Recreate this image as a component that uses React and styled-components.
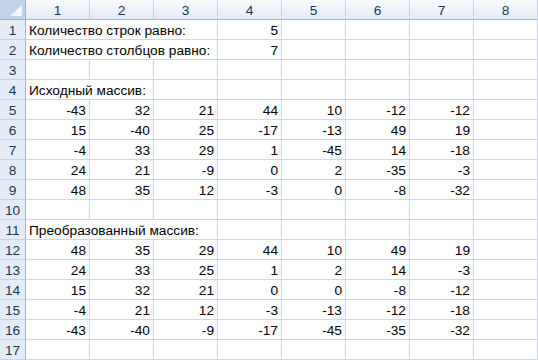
import React from 'react';
import styled, { createGlobalStyle } from 'styled-components';

const GlobalStyle = createGlobalStyle`
  html, body {
    margin: 0;
    padding: 0;
    background: #ffffff;
  }
`;

const Sheet = styled.div`
  display: grid;
  grid-template-columns: 26px repeat(8, 64px);
  grid-auto-rows: 20px;
  width: 538px;
  height: 360px;
  overflow: hidden;
  font-family: 'Liberation Sans', Arial, sans-serif;
  font-size: 13.7px;
  color: #000000;
`;

const Corner = styled.div`
  position: relative;
  box-sizing: border-box;
  background: #c3d4ea;
  border-right: 1px solid #9eb6ce;
  border-bottom: 1px solid #9eb6ce;
  & > svg {
    position: absolute;
    right: 3px;
    bottom: 3px;
  }
`;

const ColHeader = styled.div`
  box-sizing: border-box;
  display: flex;
  align-items: center;
  justify-content: center;
  background: linear-gradient(#f8fafd, #e4ebf5);
  border-right: 1px solid #c5d3e4;
  border-bottom: 1px solid #9eb6ce;
  color: #1f3656;
  padding-top: 2px;
`;

const RowHeader = styled.div`
  box-sizing: border-box;
  display: flex;
  align-items: center;
  justify-content: center;
  background: #e4ecf7;
  border-right: 1px solid #9eb6ce;
  border-bottom: 1px solid #c5d3e4;
  color: #1f3656;
  padding-top: 2px;
`;

const Cell = styled.div`
  box-sizing: border-box;
  grid-column: span ${(p) => p.$span || 1};
  display: flex;
  align-items: center;
  justify-content: ${(p) => (p.$text ? 'flex-start' : 'flex-end')};
  padding: 2px 3px 0 3px;
  border-right: 1px solid #d0d7e5;
  border-bottom: 1px solid #d0d7e5;
  white-space: nowrap;
`;

const COLS = 8;

const rows = [
  [{ text: 'Количество строк равно:', span: 3 }, 5],
  [{ text: 'Количество столбцов равно:', span: 3 }, 7],
  [],
  [{ text: 'Исходный массив:', span: 2 }],
  [-43, 32, 21, 44, 10, -12, -12],
  [15, -40, 25, -17, -13, 49, 19],
  [-4, 33, 29, 1, -45, 14, -18],
  [24, 21, -9, 0, 2, -35, -3],
  [48, 35, 12, -3, 0, -8, -32],
  [],
  [{ text: 'Преобразованный массив:', span: 3 }],
  [48, 35, 29, 44, 10, 49, 19],
  [24, 33, 25, 1, 2, 14, -3],
  [15, 32, 21, 0, 0, -8, -12],
  [-4, 21, 12, -3, -13, -12, -18],
  [-43, -40, -9, -17, -45, -35, -32],
  [],
];

const renderRow = (row, r) => {
  const cells = [];
  let used = 0;
  row.forEach((v, i) => {
    if (v !== null && typeof v === 'object') {
      cells.push(
        <Cell key={i} $text $span={v.span}>
          {v.text}
        </Cell>
      );
      used += v.span;
    } else {
      cells.push(<Cell key={i}>{v}</Cell>);
      used += 1;
    }
  });
  for (let i = used; i < COLS; i++) cells.push(<Cell key={`e${i}`} />);
  return (
    <React.Fragment key={r}>
      <RowHeader>{r + 1}</RowHeader>
      {cells}
    </React.Fragment>
  );
};

const App = () => (
  <>
    <GlobalStyle />
    <Sheet>
      <Corner>
        <svg width="12" height="11" viewBox="0 0 12 11">
          <polygon points="12,0 12,11 0,11" fill="#f2f6fb" />
        </svg>
      </Corner>
      {Array.from({ length: COLS }, (_, i) => (
        <ColHeader key={i}>{i + 1}</ColHeader>
      ))}
      {rows.map(renderRow)}
    </Sheet>
  </>
);

export default App;
